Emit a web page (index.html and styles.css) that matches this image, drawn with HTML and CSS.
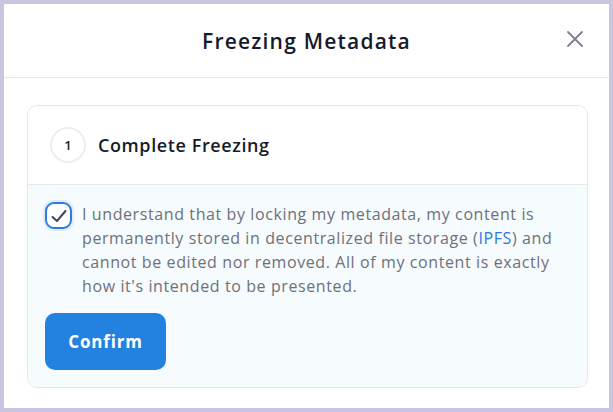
FILE: index.html
```html
<!DOCTYPE html>
<html>
<head>
<meta charset="utf-8">
<link rel="stylesheet" href="styles.css">
</head>
<body>
<div class="modal">
  <div class="modal-header">
    <h1 class="title">Freezing Metadata</h1>
    <button class="close" aria-label="Close">
      <svg width="18" height="18" viewBox="0 0 18 18"><path d="M2 2 L16 16 M16 2 L2 16" stroke="#7c808b" stroke-width="1.8" stroke-linecap="round" fill="none"/></svg>
    </button>
  </div>
  <div class="modal-body">
    <div class="card">
      <div class="card-head">
        <span class="step">1</span>
        <span class="step-title">Complete Freezing</span>
      </div>
      <div class="card-body">
        <label class="agree">
          <span class="check">
            <svg width="20" height="20" viewBox="0 0 20 20"><path d="M3.5 11 L8 15 L16.5 5" stroke="#3b4866" stroke-width="2" stroke-linecap="round" stroke-linejoin="round" fill="none"/></svg>
          </span>
          <span class="agree-text">I understand that by locking my metadata, my content is permanently stored in decentralized file storage (<span class="link">IPFS</span>) and cannot be edited nor removed. All of my content is exactly how it's intended to be presented.</span>
        </label>
        <button class="confirm">Confirm</button>
      </div>
    </div>
  </div>
</div>
</body>
</html>
```

FILE: styles.css
```css
* { box-sizing: border-box; }
html, body { margin: 0; padding: 0; }
body {
  background: #c9c4e2;
  width: 613px;
  height: 412px;
  padding: 4px 4px 4px 4px;
  font-family: "Open Sans", "Noto Sans", sans-serif;
}
.modal {
  background: #ffffff;
  width: 605px;
  height: 404px;
  display: flex;
  flex-direction: column;
}
.modal-header {
  height: 74px;
  border-bottom: 1px solid #e7e7ea;
  display: flex;
  align-items: center;
  justify-content: center;
  position: relative;
}
.title {
  margin: 0;
  font-size: 21px;
  font-weight: 600;
  color: #151a2b;
  letter-spacing: 1.2px;
}
.close {
  position: absolute;
  right: 25px;
  top: 26px;
  width: 18px;
  height: 18px;
  padding: 0;
  border: 0;
  background: none;
  display: flex;
}
.modal-body {
  padding: 27px 21px 0 23px;
}
.card {
  border: 1px solid #e5e7eb;
  border-radius: 10px;
  overflow: hidden;
  height: 283px;
  display: flex;
  flex-direction: column;
}
.card-head {
  height: 82px;
  border-bottom: 1px solid #e7e8ea;
  display: flex;
  align-items: center;
  padding-left: 22px;
  gap: 12px;
  background: #fff;
}
.step {
  width: 36px;
  height: 36px;
  border: 2px solid #eceef0;
  border-radius: 50%;
  display: flex;
  align-items: center;
  justify-content: center;
  font-size: 13px;
  font-weight: 600;
  color: #1b1f2e;
}
.step-title {
  font-size: 18px;
  font-weight: 600;
  color: #161b2c;
  letter-spacing: 0.6px;
}
.card-body {
  flex: 1;
  background: #f6fbfd;
  padding: 17px 17px 17px 17px;
  display: flex;
  flex-direction: column;
  align-items: flex-start;
}
.agree {
  display: flex;
  gap: 10px;
  align-items: flex-start;
}
.check {
  flex: none;
  width: 27px;
  height: 27px;
  margin-top: 0;
  border: 2px solid #2f7dd6;
  border-radius: 9px;
  background: #fff;
  display: flex;
  align-items: center;
  justify-content: center;
  box-shadow: 0 0 0 2px rgba(47,125,214,0.12);
}
.agree-text {
  font-size: 16px;
  line-height: 24px;
  color: #6e717b;
  letter-spacing: 0.6px;
  width: 475px;
}
.link { color: #2a7ad8; }
.confirm {
  margin-top: 15px;
  width: 121px;
  height: 57px;
  border: 0;
  border-radius: 10px;
  background: #2381e0;
  color: #fff;
  font-family: "Open Sans", "Noto Sans", sans-serif;
  font-size: 17px;
  font-weight: 700;
  letter-spacing: 0.8px;
}
```
